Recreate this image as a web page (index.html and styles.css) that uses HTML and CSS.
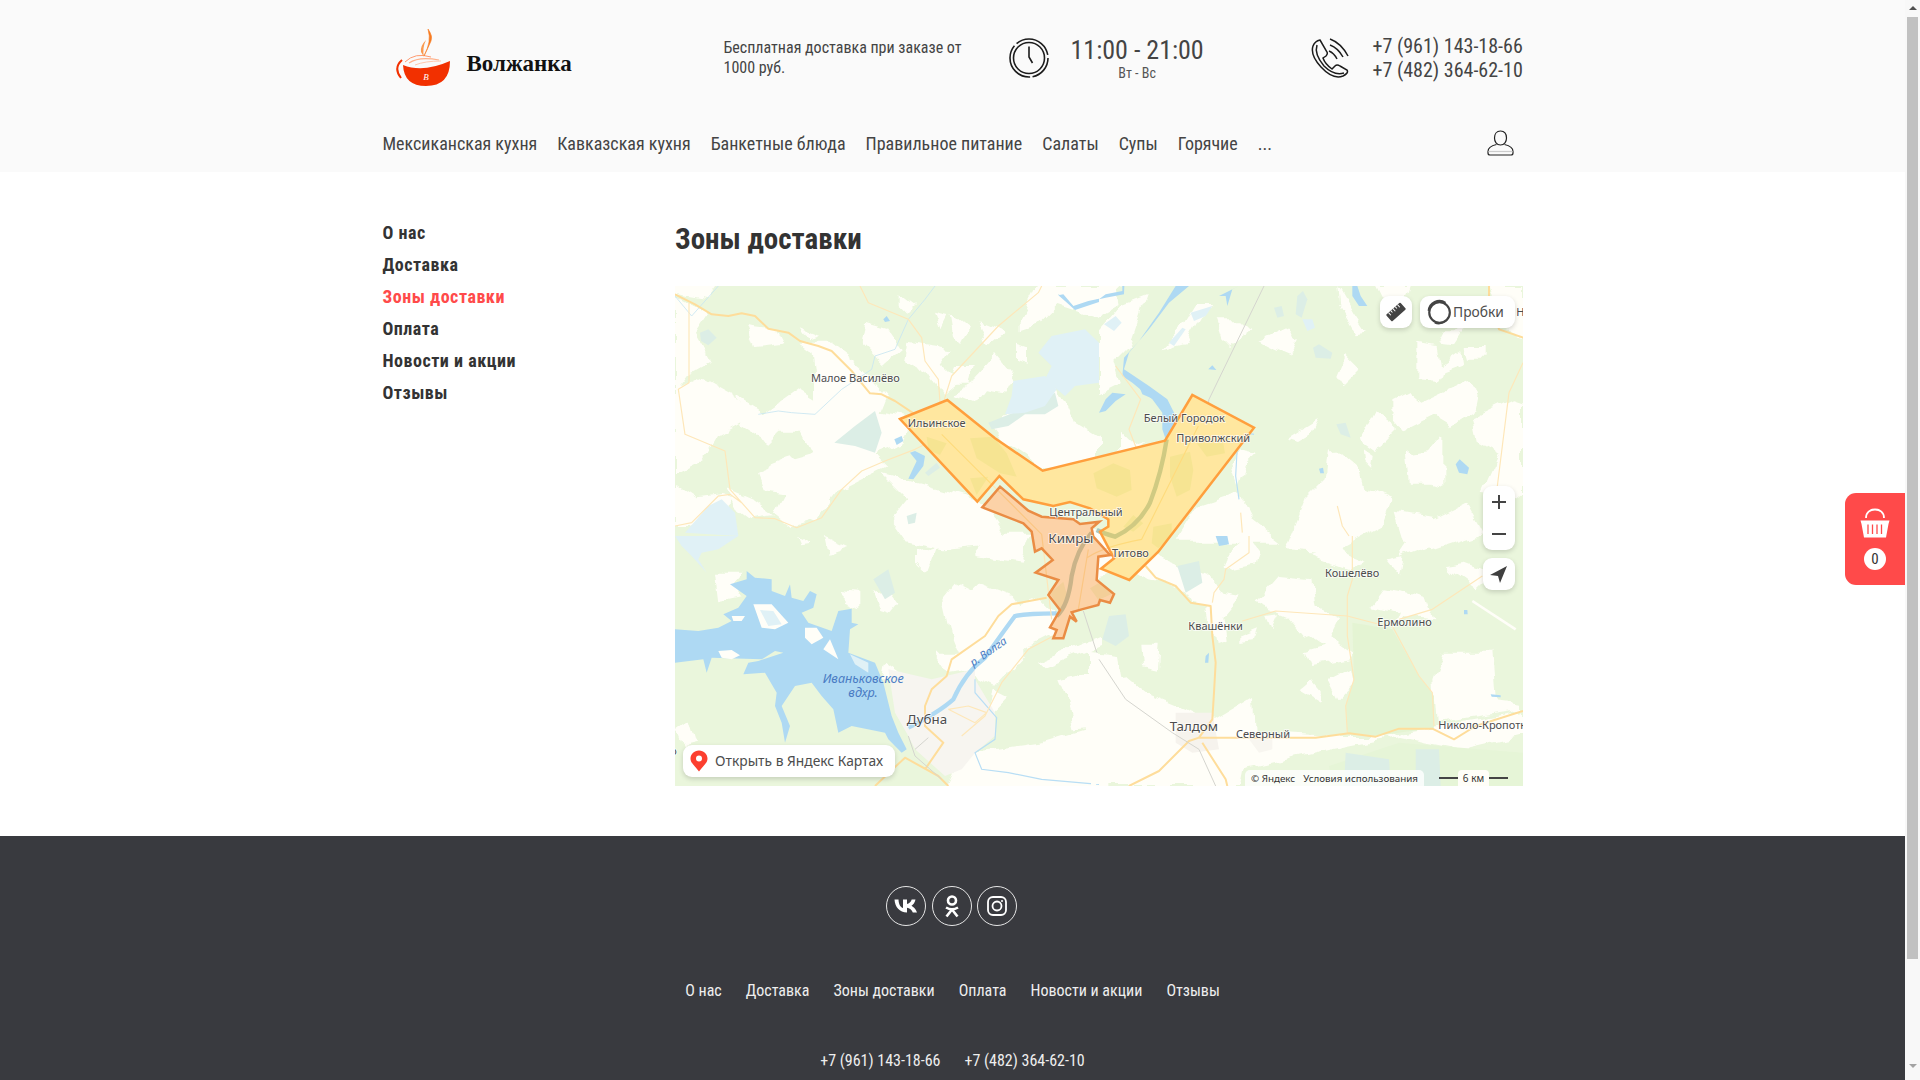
FILE: index.html
```html
<!DOCTYPE html>
<html lang="ru">
<head>
<meta charset="utf-8">
<title>Зоны доставки — Волжанка</title>
<link rel="stylesheet" href="styles.css">
</head>
<body>
<div class="viewport">
<div class="page">
  <header class="header">
    <div class="container">
      <div class="header-top">
        <a class="logo">
          <svg class="logo-cup" viewBox="0 0 56 60" width="56" height="60">
            <path d="M8 37Q28 45 55 33Q55 58 31 58Q9 58 8 37Z" fill="#f23000"/>
            <path d="M7 32Q-2 40 6 50" fill="none" stroke="#f23000" stroke-width="2"/>
            <path d="M10 34Q20 24 36 29" fill="none" stroke="#ff9a70" stroke-width="1"/>
            <path d="M14 35Q24 28 44 32" fill="none" stroke="#ffb08a" stroke-width="1.2"/>
            <path d="M20 37Q30 33 46 33" fill="none" stroke="#ffc8ae" stroke-width="1"/>
            <path d="M33 1Q38 8 36 13Q33 20 29 28Q33 20 34 14Q35 8 33 1Z" fill="#f77a20" stroke="#f77a20" stroke-width=".6"/>
            <path d="M31 12Q25 18 26 24L29 29Q27 20 31 12Z" fill="#f99a50"/>
            <text x="31" y="52" class="logo-b">B</text>
          </svg>
          <span class="logo-name">Волжанка</span>
        </a>
        <p class="delivery">Бесплатная доставка при заказе от<br>1000 руб.</p>
        <div class="hours">
          <svg viewBox="0 0 40 40" width="40" height="40" fill="none" stroke="#1c1c1c">
            <circle cx="20" cy="20" r="19" stroke-width="1.6" stroke-dasharray="26 2.5 44 3 40 4"/>
            <circle cx="20" cy="20" r="15.5" stroke-width="1.6"/>
            <path d="M20 8.5V19L23.5 25" stroke-width="1.6"/>
          </svg>
          <div class="hours-text">
            <div class="hours-time">11:00 - 21:00</div>
            <div class="hours-days">Вт - Вс</div>
          </div>
        </div>
        <div class="phones">
          <svg viewBox="0 0 38 40" width="38" height="40" fill="none" stroke="#1c1c1c" stroke-width="1.5">
            <path d="M9 2L16 14Q17 16 15 18L12 20Q14 26 21 31L24 28Q26 26 29 28L36 32Q38 35 32 38Q22 42 10 29Q-1 17 2 8Q4 3 9 2Z"/>
            <path d="M6 7Q3 16 13 28Q23 38 33 35"/>
            <path d="M19 1Q30 5 37 18M19 7Q27 10 32 19M18 13Q23 15 26 21"/>
          </svg>
          <div class="phones-list">
            <div>+7 (961) 143-18-66</div>
            <div>+7 (482) 364-62-10</div>
          </div>
        </div>
      </div>
      <nav class="nav">
        <a>Мексиканская кухня</a>
        <a>Кавказская кухня</a>
        <a>Банкетные блюда</a>
        <a>Правильное питание</a>
        <a>Салаты</a>
        <a>Супы</a>
        <a>Горячие</a>
        <a>...</a>
        <svg class="user" viewBox="0 0 27 26" width="27" height="26" fill="none" stroke="#222" stroke-width="1.2">
          <path d="M13.5 1C9.5 1 7.5 4 7.5 8C7.5 11.5 9.5 15 13.5 15C17.5 15 19.5 11.5 19.5 8C19.5 4 17.5 1 13.5 1Z"/>
          <path d="M9.5 14.5C5 15.5 1 17 1 21.500V23C1 24.500 2 25 3 25H24C25 25 26 24.500 26 23V21.500C26 17 22 15.500 17.500 14.500"/>
          <path d="M1.500 21.500H25.500" stroke="#ccc"/>
        </svg>
      </nav>
    </div>
  </header>

  <main class="container main">
    <aside class="side">
      <a>О нас</a>
      <a>Доставка</a>
      <a class="active">Зоны доставки</a>
      <a>Оплата</a>
      <a>Новости и акции</a>
      <a>Отзывы</a>
    </aside>
    <section class="content">
      <h1 class="title">Зоны доставки</h1>
      <div class="map">
        <svg class="map-svg" viewBox="0 0 2544 1500" width="848" height="500">
          <defs>
            <filter id="rough" x="-5%" y="-5%" width="110%" height="110%" filterUnits="objectBoundingBox" color-interpolation-filters="sRGB">
              <feTurbulence type="fractalNoise" baseFrequency="0.014" numOctaves="3" seed="4" result="n"/>
              <feDisplacementMap in="SourceGraphic" in2="n" scale="42" xChannelSelector="R" yChannelSelector="G"/>
            </filter>
          </defs>
          <rect width="2544" height="1500" fill="#eaf6dc"/>
          <!-- Northwest quadrant -->
          <g class="cream">
            <polygon points="0,30 100,80 60,140 110,230 40,270 10,310 90,270 180,320 210,400 120,450 80,520 0,560"/>
            <polygon points="0,0 130,0 100,40 40,30 0,20"/>
            <polygon points="220,120 300,130 320,170 240,180"/>
            <polygon points="380,130 430,150 400,160"/>
            <polygon points="370,170 470,170 560,240 640,330 620,380 720,400 680,470 600,500 640,540 560,580 480,620 420,700 350,720 300,680 330,620 260,610 240,560 340,520 410,500 380,440 310,440 280,470 200,420 190,330 270,380 370,310 420,340 420,280 410,200"/>
            <polygon points="570,110 640,130 680,190 620,240 560,180"/>
            <polygon points="680,30 720,60 700,80 680,60"/>
            <polygon points="780,80 820,90 800,130"/>
            <polygon points="830,90 880,130 860,170 840,150"/>
            <polygon points="700,170 830,190 800,230 850,280 800,320 760,260 690,220"/>
            <polygon points="840,240 890,240 880,290 820,290"/>
            <polygon points="960,210 1020,280 1000,320 930,310 900,350 830,320 900,280"/>
            <polygon points="1020,170 1050,180 1050,230 1020,220"/>
            <polygon points="1090,0 1330,0 1340,60 1272,100 1150,60 1100,110 1040,130 1040,100"/>
            <polygon points="910,100 960,120 990,140 940,180"/>
            <polygon points="1080,290 1150,310 1190,400 1272,450 1272,600 1200,540 1110,550 990,470 950,420 1000,380 1080,370"/>
            <polygon points="620,560 760,600 900,640 940,680 1000,770 800,790 700,770 650,700 700,640"/>
            <polygon points="0,600 60,640 140,630 180,640 130,690 40,720 0,720"/>
            <polygon points="160,610 230,640 300,690 230,700 190,670"/>
          </g>
          <!-- Northeast quadrant -->
          <g transform="translate(1272 0)">
            <g class="cream">
              <polygon points="475,165 570,120 590,170 570,210 500,180"/>
              <polygon points="715,270 740,210 790,260 740,310"/>
              <polygon points="715,0 760,80 800,140 770,145 720,60"/>
              <polygon points="830,0 935,0 920,45 850,40"/>
              <polygon points="955,170 1010,180 1020,240 1090,190 1095,225 1030,250 1020,285 955,280"/>
              <polygon points="880,340 930,315 970,350 1100,290 1140,320 1130,370 1050,420 1000,390 920,430 880,380"/>
              <polygon points="785,460 830,370 900,420 850,470 835,495"/>
              <polygon points="570,455 660,400 640,440 600,465"/>
              <polygon points="800,490 830,510 825,545 805,525"/>
              <polygon points="690,480 780,560 790,600 880,640 850,720 700,800 560,790 620,640 680,580"/>
              <polygon points="920,500 990,490 1030,440 1030,600 1000,590 930,590"/>
              <polygon points="1115,400 1240,340 1272,350 1272,640 1150,620 1200,510 1130,470"/>
              <polygon points="890,680 1000,700 1100,650 1150,740 1000,790 920,780"/>
              <polygon points="1100,180 1160,180 1160,215 1110,215"/>
              <polygon points="1040,130 1090,130 1060,175 1020,170"/>
              <polygon points="1170,0 1272,0 1272,150 1200,130"/>
              <polygon points="0,0 70,0 10,30 0,30"/>
              <polygon points="0,130 60,60 140,30 90,180 40,230 60,300 0,330"/>
              <polygon points="190,190 250,125 290,60 350,60 300,100 260,170"/>
              <polygon points="350,100 430,100 460,130 390,180 370,160"/>
              <polygon points="60,440 100,480 130,470 90,510 60,490"/>
              <polygon points="300,660 420,620 460,700 550,770 230,770"/>
              <polygon points="420,490 480,500 440,540 420,600 400,540"/>
            </g>
            <g class="pale-blue">
              <polygon points="15,115 50,90 68,110 45,135"/>
              <polygon points="275,80 340,60 320,90 285,105"/>
              <polygon points="210,170 250,125 260,130 225,180"/>
              <polygon points="610,100 640,100 648,125 625,135"/>
            </g>
            <g class="pale-lake">
              <polygon points="525,65 548,60 555,90 535,95"/>
              <polygon points="595,30 612,15 625,40 608,95 590,85"/>
              <polygon points="642,185 660,175 700,200 695,218 650,215"/>
              <polygon points="712,415 740,410 755,455 725,445"/>
            </g>
            <g class="water">
              <polygon points="270,0 210,50 150,130 90,200 75,250 150,300 205,340 235,400 200,460 190,430 190,380 160,340 100,290 70,270 75,215 120,165 180,80 230,0"/>
              <polygon points="0,380 20,340 40,320 80,325 50,345 20,375"/>
              <polygon points="120,300 165,340 130,325"/>
              <polygon points="328,250 340,238 352,252"/>
              <polygon points="760,0 775,0 785,30 805,60 780,60 760,30"/>
              <polygon points="1070,535 1082,520 1110,545 1105,565 1080,560"/>
              <polygon points="660,548 672,545 675,562 664,562"/>
              <polygon points="0,40 20,25 70,15 70,0 76,0 75,25 20,35"/>
              <polygon points="360,30 420,0 400,10 385,60 380,30"/>
            </g>
            <path class="stream" d="M415 480L410 570L420 640M465 445L330 420"/>
            <path class="road-thin" d="M50 240L125 340L90 430L125 520L50 640M715 660L730 720L750 750M425 680L430 740M1272 230L1230 320L1210 480L1195 600"/>
            <path class="road" d="M1170 0L1170 30L1200 130L1272 155"/>
            <path class="rail" d="M495 0L330 340L260 620L150 740"/>
          </g>
          <!-- Southwest quadrant -->
          <g transform="translate(0 750)">
            <g class="cream">
              <polygon points="120,110 200,110 165,150 200,175 130,190"/>
              <polygon points="500,165 550,170 550,220 500,200"/>
              <polygon points="590,170 640,160 670,200 640,235 610,225"/>
              <polygon points="805,190 845,140 895,165 915,145 1010,180 1030,210 1100,180 1140,220 1140,300 1100,320 1060,340 960,450 920,430 900,400 820,410 780,350 850,350 830,300"/>
              <polygon points="720,50 780,30 750,110 720,80"/>
              <polygon points="900,60 960,-10 1070,-10 1040,80"/>
              <polygon points="450,0 520,30 460,50"/>
              <polygon points="360,0 400,20 370,25"/>
              <polygon points="0,580 40,550 60,620 20,630"/>
              <polygon points="860,650 960,640 1100,620 1300,560 1300,780 800,780"/>
              <polygon points="1080,380 1272,300 1272,330 1100,400"/>
              <polygon points="1150,430 1300,390 1300,570 1200,580 1180,500"/>
              <polygon points="960,460 1000,480 920,560"/>
              <polygon points="630,380 700,430 620,430"/>
            </g>
            <polygon points="0,0 190,0 130,40 80,50 70,70 95,110 50,60 20,30" class="pale-blue"/>
            <polygon points="595,130 640,100 660,170 630,190" class="pale-lake"/>
            <polygon points="640,400 770,430 900,400 900,430 960,530 960,600 900,650 860,700 810,720 720,640 700,600 660,530" fill="#f7f5f0"/>
            <polygon class="water" points="0,280 70,285 130,275 170,255 145,235 190,215 215,180 165,145 215,130 215,105 240,125 290,130 290,165 330,180 345,145 350,185 385,195 405,165 425,175 415,215 380,230 400,260 470,285 490,225 530,218 530,260 550,265 525,280 520,350 600,380 625,440 650,540 670,590 695,640 680,650 640,610 630,590 530,570 490,590 475,520 440,480 410,440 360,450 320,510 345,570 330,620 320,560 300,510 305,470 270,410 205,415 220,380 250,375 325,350 300,345 260,370 110,365 95,410 85,370 0,380"/>
            <g class="island">
              <polygon points="130,345 170,342 195,358 170,370 140,365"/>
              <polygon points="235,205 290,205 340,260 300,280 260,275"/>
              <polygon points="390,275 425,275 445,305 410,325 390,305"/>
              <polygon points="445,340 465,310 490,370"/>
              <polygon points="170,240 210,240 200,255 175,255"/>
            </g>
            <polygon class="pale-blue" points="525,355 580,380 580,410 540,385"/>
            <polygon class="pale-blue" points="255,222 295,225 320,265 280,270"/>
            <path class="river" d="M1145 232Q1060 232 1020 240Q990 280 930 365Q870 410 835 490Q790 530 700 575"/>
            <path class="stream" d="M900 430L900 470L965 545L960 610L900 650L920 700L1000 710L1100 730L1272 745"/>
            <path class="road-thin" d="M1135 300L1060 340L980 440L930 540L860 600M820 520L900 560L935 530L880 510L820 520"/>
            <path class="road" d="M1115 185L1010 205L970 240L930 300L830 370L815 420L770 460L750 510L750 570L805 620L750 700M600 750L690 665L790 720L820 750"/>
            <path class="rail" d="M1225 225L1272 370M700 600L720 660L800 730M720 640L760 605"/>
          </g>
          <!-- Southeast quadrant -->
          <g transform="translate(1272 750)">
            <g class="cream">
              <polygon points="-30,130 100,100 150,130 240,150 270,200 330,210 350,330 380,320 370,240 420,180 370,170 340,130 -30,-20"/>
              <polygon points="130,320 185,320 180,410 135,400"/>
              <polygon points="-30,350 60,360 70,420 130,470 250,520 330,560 465,480 470,590 660,600 830,600 1000,575 1272,525 1272,600 1100,640 900,600 700,640 430,700 420,750 -30,750"/>
              <polygon points="430,300 480,280 470,310 430,315"/>
              <polygon points="505,240 540,235 520,280"/>
              <polygon points="470,200 540,120 640,130 650,210 720,240 690,300 760,350 750,370 640,390 620,345 670,330 610,290 570,240"/>
              <polygon points="605,460 640,430 665,460 665,495"/>
              <polygon points="690,430 750,400 760,450 720,490"/>
              <polygon points="820,210 860,160 920,170 980,190 1000,250 910,240 880,280 900,230"/>
              <polygon points="1040,90 1100,80 1180,110 1130,160 1060,110"/>
              <polygon points="940,0 1000,20 900,60"/>
              <polygon points="640,60 700,40 800,80 750,100"/>
              <polygon points="860,70 910,60 900,120"/>
              <polygon points="1030,350 1180,350 1190,490 1272,500 1272,520 1010,560 1000,430"/>
              <polygon points="370,100 470,80 480,40 450,0 380,60"/>
            </g>
            <polygon points="760,260 880,280 960,420 1005,480 1005,575 830,600 745,590 740,510 765,430" fill="#e4f4d3"/>
            <polygon points="690,690 900,620 1272,650 1272,750 700,750" fill="#e6f5d7"/>
            <g class="pale-lake">
              <polygon points="235,90 300,75 310,140 260,170"/>
              <polygon points="10,310 30,240 80,235 90,300 50,330"/>
              <polygon points="740,650 870,670 875,750 735,750"/>
              <polygon points="950,640 1020,640 1025,750 950,750"/>
            </g>
            <g class="water">
              <polygon points="350,0 385,0 390,25 360,30"/>
              <polygon points="320,360 330,350 328,380 318,380"/>
              <polygon points="1095,222 1105,222 1106,235 1095,235"/>
              <polygon points="1175,475 1205,478 1205,484 1178,482"/>
            </g>
            <polygon points="230,530 340,530 360,640 280,650 230,620" fill="#f6f3ed"/>
            <polygon points="450,610 520,610 520,640 480,650" fill="#f8f6f0"/>
            <path class="white-line" d="M1120 195L1250 280"/>
            <path class="road-thin" d="M340 200L345 170L375 130L380 100L450 50L450 0M430 255L530 225L745 240L860 270M760 0L760 130L745 180L745 300L765 430L740 510L745 590M880 270L960 420L1000 470L1005 570M900 250L1000 220L1150 120"/>
            <path class="road" d="M140 90L170 125L230 150L275 200L335 210L340 300L350 380L345 470L340 550L300 605L270 615L180 705L90 750M300 605L650 605L750 592L830 602L900 578L1000 578L1065 610L1130 570L1272 525M310 620L380 730L385 750"/>
            <path class="rail" d="M0 370L80 490L220 590L300 640L350 750"/>
          </g>
          <!-- Main roads and rivers of the northwest -->
          <path class="river-thin" d="M250 385L310 375L350 380L420 385L500 310L590 250L600 210L660 190L700 100L750 40L780 0M0 30L50 90L130 0M1150 25L1200 65L1272 40"/>
          <g class="pale-lake">
            <polygon points="478,470 540,420 600,375 620,440 600,500 540,480"/>
            <polygon points="75,140 100,130 125,155 100,178 78,165"/>
            <polygon points="940,410 1015,380 1100,340 1140,320 1150,360 1110,385 1050,385 1000,420 950,430"/>
          </g>
          <g class="pale-blue">
            <polygon points="1090,200 1130,150 1230,130 1272,170 1272,290 1200,300 1170,330 1110,280 1130,240"/>
            <polygon points="1015,285 1110,270 1145,310 1110,360 1050,380 990,385 1010,330"/>
            <polygon points="30,740 100,660 140,640 180,680 190,750"/>
          </g>
          <polygon class="pale-lake" points="750,560 785,530 795,545 760,570"/>
          <polygon class="pale-lake" points="695,690 725,680 720,710 700,715"/>
          <g class="water">
            <polygon points="658,460 680,450 685,465 665,477"/>
            <polygon points="705,500 720,495 750,510 745,540 715,580 700,578 725,525"/>
            <polygon points="625,100 635,90 645,105 630,108"/>
            <polygon points="1150,28 1165,25 1195,60 1240,45 1272,38 1272,48 1200,72 1170,45"/>
          </g>
          <path class="road" d="M0 25L60 55L110 85L160 90L200 82L240 90L280 128L340 140L375 165L430 180L470 195L530 255L585 322L620 325L660 345L720 385L800 445"/>
          <path class="road-thin" d="M42 50L42 290L10 310L30 445L150 495L165 610L200 650L240 695L300 698L365 725L440 695L500 610L560 555L630 525L720 490L800 450L950 590M555 0L580 50L700 100L740 155L750 225L790 280L795 350M1100 0L1090 20L970 120L830 270L805 350M0 720L50 710L130 630L165 625L200 650"/>
          <!-- Ground under the delivery zones -->
          <polygon class="zone-ground" points="675,399 817,342 960,457 1103,554 1470,464 1552,327 1737,425 1450,797 1363,882 1278,848 1317,817 1275,737 1300,722 1300,700 1245,667 1185,648 1135,660 1045,640 973,570 907,647"/>
          <polygon class="zone-ground" transform="translate(555 282)" points="420,320 505,392 545,410 640,418 660,432 718,425 695,445 700,470 750,525 715,530 710,600 762,642 750,668 720,660 715,675 665,688 635,697 650,725 630,710 610,775 580,775 590,750 570,742 600,690 565,645 595,600 527,578 578,540 545,505 525,515 515,455 490,430 367,382"/>
          <g transform="translate(555 282)" class="zone-forest">
            <polygon points="700,280 760,250 810,270 815,330 770,350 710,325"/>
            <polygon points="930,230 990,215 1000,270 990,330 950,350 930,290"/>
            <polygon points="1010,190 1090,190 1095,220 1040,230"/>
            <polygon points="330,175 400,170 440,220 470,290 420,280 350,235"/>
            <polygon points="200,170 260,190 240,225 205,210"/>
            <polygon points="330,295 385,290 350,345"/>
            <polygon points="790,440 820,405 850,430 820,455"/>
            <polygon points="880,440 935,430 935,470 895,505 875,490"/>
            <polygon points="570,640 610,605 625,660 600,690"/>
            <polygon points="690,625 715,610 760,640 715,660"/>
          </g>
          <!-- River under the delivery zones -->
          <path class="river river-zone" d="M1475 460Q1460 560 1425 650Q1390 720 1320 752Q1280 740 1265 732"/>
          <path class="river river-zone" d="M1250 740Q1205 790 1190 870Q1180 960 1145 990"/>
          <path class="road-thin" d="M800 445L1100 745L1130 1000M1236 815Q1290 780 1400 760L1570 420M1240 790L1210 970"/>
          <!-- Delivery zones -->
          <polygon class="zone-yellow" points="675,399 817,342 960,457 1103,554 1470,464 1552,327 1737,425 1450,797 1363,882 1278,848 1317,817 1275,737 1300,722 1300,700 1245,667 1185,648 1135,660 1045,640 973,570 907,647"/>
          <polygon class="zone-orange" transform="translate(555 282)" points="420,320 505,392 545,410 640,418 660,432 718,425 695,445 700,470 750,525 715,530 710,600 762,642 750,668 720,660 715,675 665,688 635,697 650,725 630,710 610,775 580,775 590,750 570,742 600,690 565,645 595,600 527,578 578,540 545,505 525,515 515,455 490,430 367,382"/>
          <!-- Labels -->
          <g class="labels">
            <text x="408" y="289">Малое Василёво</text>
            <text x="698" y="423">Ильинское</text>
            <text x="1123" y="690">Центральный</text>
            <text x="1120" y="770" class="big">Кимры</text>
            <text x="1311" y="813">Титово</text>
            <text x="1406" y="408">Белый Городок</text>
            <text x="1504" y="468">Приволжский</text>
            <text x="1950" y="873">Кошелёво</text>
            <text x="1540" y="1032">Квашёнки</text>
            <text x="2107" y="1021">Ермолино</text>
            <text x="1484" y="1335" class="big">Талдом</text>
            <text x="1683" y="1356">Северный</text>
            <text x="2290" y="1329">Николо-Кропоткинское</text>
            <text x="695" y="1314" class="big">Дубна</text>
            <text x="-14" y="1406">о</text>
            <text x="2524" y="89">Не</text>
            <text x="443" y="1190" class="water-label">Иваньковское</text>
            <text x="520" y="1233" class="water-label">вдхр.</text>
            <text transform="translate(895 1142) rotate(-35)" class="water-label small">р. Волга</text>
          </g>
        </svg>

        <button class="ctl ctl-ruler" aria-label="Линейка">
          <svg viewBox="0 0 20 20" width="20" height="20">
            <g transform="rotate(-42 10 10)">
              <rect x="0.500" y="5.500" width="19" height="9" rx="1" fill="#444"/>
              <path d="M4 5.500V9M7 5.500V8M10 5.500V9M13 5.500V8M16 5.500V9" stroke="#fff" stroke-width="1"/>
            </g>
          </svg>
        </button>
        <button class="ctl ctl-traffic">
          <svg viewBox="0 0 24 24" width="26" height="26" fill="none">
            <circle cx="12.500" cy="12.500" r="9.500" stroke="#444" stroke-width="2"/>
            <path d="M2.500 11A10 10 0 0 1 18 3.500" stroke="#444" stroke-width="2"/>
            <path d="M21 17A10 10 0 0 1 8 22" stroke="#444" stroke-width="1.200"/>
          </svg>
          <span>Пробки</span>
        </button>
        <div class="ctl ctl-zoom">
          <svg viewBox="0 0 32 64" width="32" height="64" stroke="#444" stroke-width="2" fill="none">
            <path d="M16 9V23M9 16H23M9 48H23"/>
          </svg>
        </div>
        <button class="ctl ctl-geo" aria-label="Геолокация">
          <svg viewBox="0 0 20 20" width="20" height="20">
            <polygon points="18,2 1,11 9,12 11,19" fill="#3f3f3f"/>
          </svg>
        </button>
        <a class="ctl ctl-open">
          <svg viewBox="0 0 18 22" width="18" height="22">
            <path d="M9 0.500C4 0.500 0.500 4.200 0.500 8.800C0.500 13 5 16 9 21.500C13 16 17.500 13 17.500 8.800C17.500 4.200 14 0.500 9 0.500Z" fill="#fc3f2f"/>
            <circle cx="9" cy="8.500" r="3" fill="#fff"/>
          </svg>
          <span>Открыть в Яндекс Картах</span>
        </a>
        <div class="copy">
          <span>© Яндекс</span>
          <span>Условия использования</span>
        </div>
        <div class="scale"><span>6 км</span></div>
      </div>
    </section>
  </main>

  <footer class="footer">
    <div class="social">
      <a class="soc">
        <svg viewBox="0 0 24 16" width="24" height="16"><path fill="#fff" d="M13 14.500C5.500 14.500 1 9 .5 1.500H4.500C4.700 7 7 9.500 9 10V1.500H13V6C15 5.800 17 3.800 17.700 1.500H21.500C21 4.500 19 6.800 17.500 7.800C19 8.600 21.900 11 23 14.500H18.800C18 12 15.500 10 13 9.800V14.500Z"/></svg>
      </a>
      <a class="soc">
        <svg viewBox="0 0 16 24" width="16" height="24" fill="none" stroke="#fff">
          <circle cx="8" cy="6.500" r="4" stroke-width="2.600"/>
          <path d="M2 13.500Q8 17 14 13.500M8 15.500L2.500 22.500M8 15.500L13.500 22.500" stroke-width="2.600"/>
        </svg>
      </a>
      <a class="soc">
        <svg viewBox="0 0 22 22" width="22" height="22" fill="none" stroke="#fff" stroke-width="1.800">
          <rect x="2" y="2" width="18" height="18" rx="5"/>
          <circle cx="11" cy="11" r="4.500"/>
          <circle cx="16" cy="6" r="1" fill="#fff" stroke="none"/>
        </svg>
      </a>
    </div>
    <nav class="foot-nav">
      <a>О нас</a>
      <a>Доставка</a>
      <a>Зоны доставки</a>
      <a>Оплата</a>
      <a>Новости и акции</a>
      <a>Отзывы</a>
    </nav>
    <div class="foot-phones">
      <a>+7 (961) 143-18-66</a>
      <a>+7 (482) 364-62-10</a>
    </div>
  </footer>

  <a class="cart">
    <svg viewBox="0 0 30 30" width="30" height="30">
      <path d="M6 10C6 4.500 10 1.500 15 1.500C20 1.500 24 4.500 24 10" fill="none" stroke="#fff" stroke-width="1.800"/>
      <path d="M.5 12.500H29.500L28.500 16L26 29.500H4L1.500 16Z" fill="#fff"/>
      <path d="M8 16.500V26M12.500 16.500V26M17 16.500V26M21.500 16.500V26" stroke="#ff4a4a" stroke-width="1.300"/>
    </svg>
    <span class="cart-count">0</span>
  </a>
</div>
<div class="scrollbar">
  <span class="sb-up"></span>
  <span class="sb-thumb"></span>
  <span class="sb-down"></span>
</div>
</div>
</body>
</html>
```

FILE: styles.css
```css
* { box-sizing: border-box; }
html, body { margin: 0; height: 100%; overflow: hidden; }
body {
  font-family: Roboto, "Liberation Sans", sans-serif;
  font-stretch: 75%;
  color: #333;
  background: #fff;
}
p, h1 { margin: 0; }
a { color: inherit; text-decoration: none; }
button { font: inherit; border: 0; padding: 0; }

.viewport { display: flex; height: 1080px; }
.page { width: 1905px; height: 1080px; overflow: hidden; position: relative; flex: none; }

.scrollbar {
  width: 15px; height: 1080px; flex: none;
  background: #f8f8f8;
  display: flex; flex-direction: column; align-items: center;
}
.sb-up, .sb-down { width: 0; height: 0; flex: none; border-left: 4px solid transparent; border-right: 4px solid transparent; }
.sb-up { border-bottom: 4px solid #505050; margin: 6px 0 7px; }
.sb-thumb { width: 11px; height: 942px; background: #c1c1c1; flex: none; }
.sb-down { border-top: 4px solid #a3a3a3; margin-top: 105px; }

.container { width: 1141px; margin-left: 382.500px; }

.header { height: 172px; background: #fafafa; }
.header-top {
  display: grid;
  grid-template-columns: 341px 285px 302px 1fr;
  align-items: center;
  height: 116px;
}
.logo { display: flex; align-items: center; padding-left: 12.500px; gap: 15.500px; }
.logo-cup { flex: none; }
.logo-b { font-family: "Liberation Serif", serif; font-style: italic; font-size: 9px; fill: #fff; text-anchor: middle; font-stretch: normal; }
.logo-name {
  font-family: "Liberation Serif", serif;
  font-stretch: normal;
  font-weight: 700;
  font-size: 23px;
  color: #111;
  padding-top: 11px;
}
.delivery { font-size: 16px; line-height: 20px; color: #444; }
.hours { display: flex; align-items: center; gap: 22px; }
.hours-text { text-align: center; }
.hours-time { font-size: 26px; line-height: 30px; color: #444; }
.hours-days { font-size: 14px; line-height: 16px; color: #555; }
.phones { display: flex; align-items: center; gap: 24px; }
.phones-list { font-size: 20px; line-height: 24px; color: #444; white-space: nowrap; }

.nav { display: flex; align-items: center; gap: 20px; height: 54px; font-size: 18px; color: #444; position: relative; }
.user { margin-left: auto; margin-right: 10px; }

.main { display: flex; height: 664px; }
.side { width: 292.500px; flex: none; padding-top: 45px; display: flex; flex-direction: column; }
.side a { font-size: 18px; font-weight: 700; line-height: 32px; letter-spacing: .5px; color: #333; }
.side a.active { color: #ff4a4a; }
.content { flex: 1; padding-top: 47px; }
.title { font-size: 29px; font-weight: 700; line-height: 40px; margin-bottom: 27px; color: #333; }

.map { position: relative; width: 848px; height: 500px; overflow: hidden; }
.map-svg { display: block; }
.cream { filter: url(#rough); }
.cream polygon, .island polygon { fill: #fffef8; }
.pale-blue, .pale-blue polygon { fill: #e0f1f6; }
.pale-lake, .pale-lake polygon { fill: #dceee6; }
.water, .water polygon { fill: #aed9f3; }
.river { fill: none; stroke: #aed9f3; stroke-width: 13; }
.river-zone { stroke: #a9c9c4; }
.river-thin { fill: none; stroke: #c8e6f2; stroke-width: 2.500; }
.stream { fill: none; stroke: #b8def5; stroke-width: 3.500; }
.road { fill: none; stroke: #fedd9b; stroke-width: 6; stroke-linejoin: round; }
.road-thin { fill: none; stroke: #fee7b9; stroke-width: 3.500; stroke-linejoin: round; }
.rail { fill: none; stroke: #d5d5cf; stroke-width: 3; }
.white-line { fill: none; stroke: #fffef8; stroke-width: 8; }
.zone-ground { fill: #fffef8; }
.zone-forest polygon { fill: #eff8e1; }
.zone-yellow { fill: #ffcc33; fill-opacity: .45; stroke: #ff9f3d; stroke-width: 7.500; stroke-linejoin: miter; }
.zone-orange { fill: #f99536; fill-opacity: .42; stroke: #ea8c44; stroke-width: 7.500; }

.labels text {
  font-family: "Noto Sans", sans-serif;
  font-stretch: normal;
  font-size: 33px;
  fill: #4d4d4d;
  paint-order: stroke;
  stroke: rgba(255, 255, 255, .75);
  stroke-width: 5px;
}
.labels .big { font-size: 40px; }
.labels .water-label { font-size: 38px; font-style: italic; fill: #4a7cc4; stroke: none; }
.labels .small { font-size: 33px; }

.ctl {
  position: absolute;
  background: #fff;
  border-radius: 9px;
  box-shadow: 0 2px 5px rgba(0, 0, 0, .16);
  display: flex; align-items: center; justify-content: center;
  font-family: "Noto Sans", sans-serif;
  font-stretch: normal;
  color: #4d4d4d;
  font-size: 13.800px;
}
.ctl span { padding-bottom: 2px; }
.ctl-ruler { left: 705px; top: 10px; width: 32px; height: 32px; }
.ctl-traffic { left: 745px; top: 10px; width: 95px; height: 32px; gap: 1px; padding-right: 5px; }
.ctl-zoom { left: 808px; top: 200px; width: 32px; height: 64px; }
.ctl-geo { left: 808px; top: 272px; width: 32px; height: 32px; }
.ctl-open { left: 8px; top: 459px; width: 212px; height: 32px; gap: 7px; white-space: nowrap; padding-right: 5px; }
.copy {
  position: absolute; left: 570px; top: 484px; width: 179px; height: 16px;
  display: flex; justify-content: center; align-items: center; gap: 8px;
  background: rgba(255, 255, 255, .8);
  font-family: "Noto Sans", sans-serif; font-stretch: normal; font-size: 9.800px; color: #333;
  border-radius: 5px 5px 0 0;
  white-space: nowrap;
}
.scale {
  position: absolute; left: 764px; top: 484px; width: 69px; height: 16px;
  display: flex; justify-content: center; align-items: center;
  font-family: "Noto Sans", sans-serif; font-stretch: normal; font-size: 10px; color: #333;
}
.scale::before { content: ""; position: absolute; left: 0; right: 0; top: 7px; height: 2px; background: #444; }
.scale span { position: relative; background: #fffef8; padding: 0 5px; line-height: 16px; border-radius: 4px 4px 0 0; }

.footer { background: #393a3f; height: 244px; padding-top: 50px; display: flex; flex-direction: column; align-items: center; color: #eee; }
.social { display: flex; gap: 5.500px; margin-right: 2px; }
.soc { width: 40px; height: 40px; border: 1px solid #e6e6e6; border-radius: 50%; display: flex; align-items: center; justify-content: center; }
.foot-nav { display: flex; gap: 24px; margin-top: 51px; font-size: 16px; line-height: 28px; }
.foot-phones { display: flex; gap: 24px; margin-top: 42px; font-size: 16px; line-height: 28px; }

.cart {
  position: absolute; right: 0; top: 493px;
  width: 60px; height: 92px;
  background: #ff4a4a;
  border-radius: 11px 0 0 11px;
  display: flex; flex-direction: column; align-items: center;
  padding-top: 15px; gap: 10px;
}
.cart-count { width: 22px; height: 22px; border-radius: 50%; background: #fff; color: #333; font-size: 15px; line-height: 22px; text-align: center; }
```
